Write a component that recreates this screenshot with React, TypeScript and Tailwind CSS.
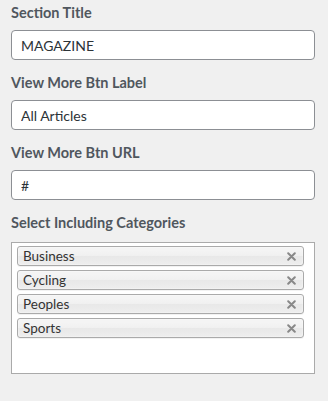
const FIELDS = [
  { label: 'Section Title', value: 'MAGAZINE' },
  { label: 'View More Btn Label', value: 'All Articles' },
  { label: 'View More Btn URL', value: '#' },
]

const CATEGORIES = ['Business', 'Cycling', 'Peoples', 'Sports']

function Chip({ name }: { name: string }) {
  return (
    <li className="flex h-5 items-center justify-between rounded-[3px] border border-[#aaaaaa] bg-[linear-gradient(#f4f4f4_20%,#f0f0f0_50%,#e8e8e8_52%,#eeeeee_100%)] pl-[5px] pr-[7px] shadow-[inset_0_0_2px_#fff,0_1px_0_rgba(0,0,0,0.05)]">
      <span className="text-[13.5px] leading-[18px] text-[#333]">{name}</span>
      <svg width="9" height="9" viewBox="0 0 9 9" className="text-[#888]">
        <path d="M1.2 1.2 L7.8 7.8 M7.8 1.2 L1.2 7.8" stroke="currentColor" strokeWidth="2" strokeLinecap="round" />
      </svg>
    </li>
  )
}

export default function App() {
  return (
    <div className="min-h-[401px] w-[328px] bg-[#f0f0f0] pl-[11px] pt-[3px] font-['Lato',sans-serif]">
      <div className="w-[304px]">
        {FIELDS.map((f) => (
          <div key={f.label} className="mb-[13px]">
            <label className="mb-[7px] block text-[14.5px] font-bold leading-5 text-[#50575e]">
              {f.label}
            </label>
            <input
              readOnly
              value={f.value}
              className="block h-[30px] w-full rounded-[4px] border border-[#8c8f94] bg-white px-[9px] text-[14px] text-[#2c3338] outline-none"
            />
          </div>
        ))}

        <label className="mb-[9px] block text-[14.5px] font-bold leading-5 text-[#50575e]">
          Select Including Categories
        </label>
        <ul className="flex h-[132px] flex-col gap-1 border border-[#aaaaaa] bg-white pl-[5px] pr-[10px] pt-[3px]">
          {CATEGORIES.map((c) => (
            <Chip key={c} name={c} />
          ))}
        </ul>
      </div>
    </div>
  )
}
